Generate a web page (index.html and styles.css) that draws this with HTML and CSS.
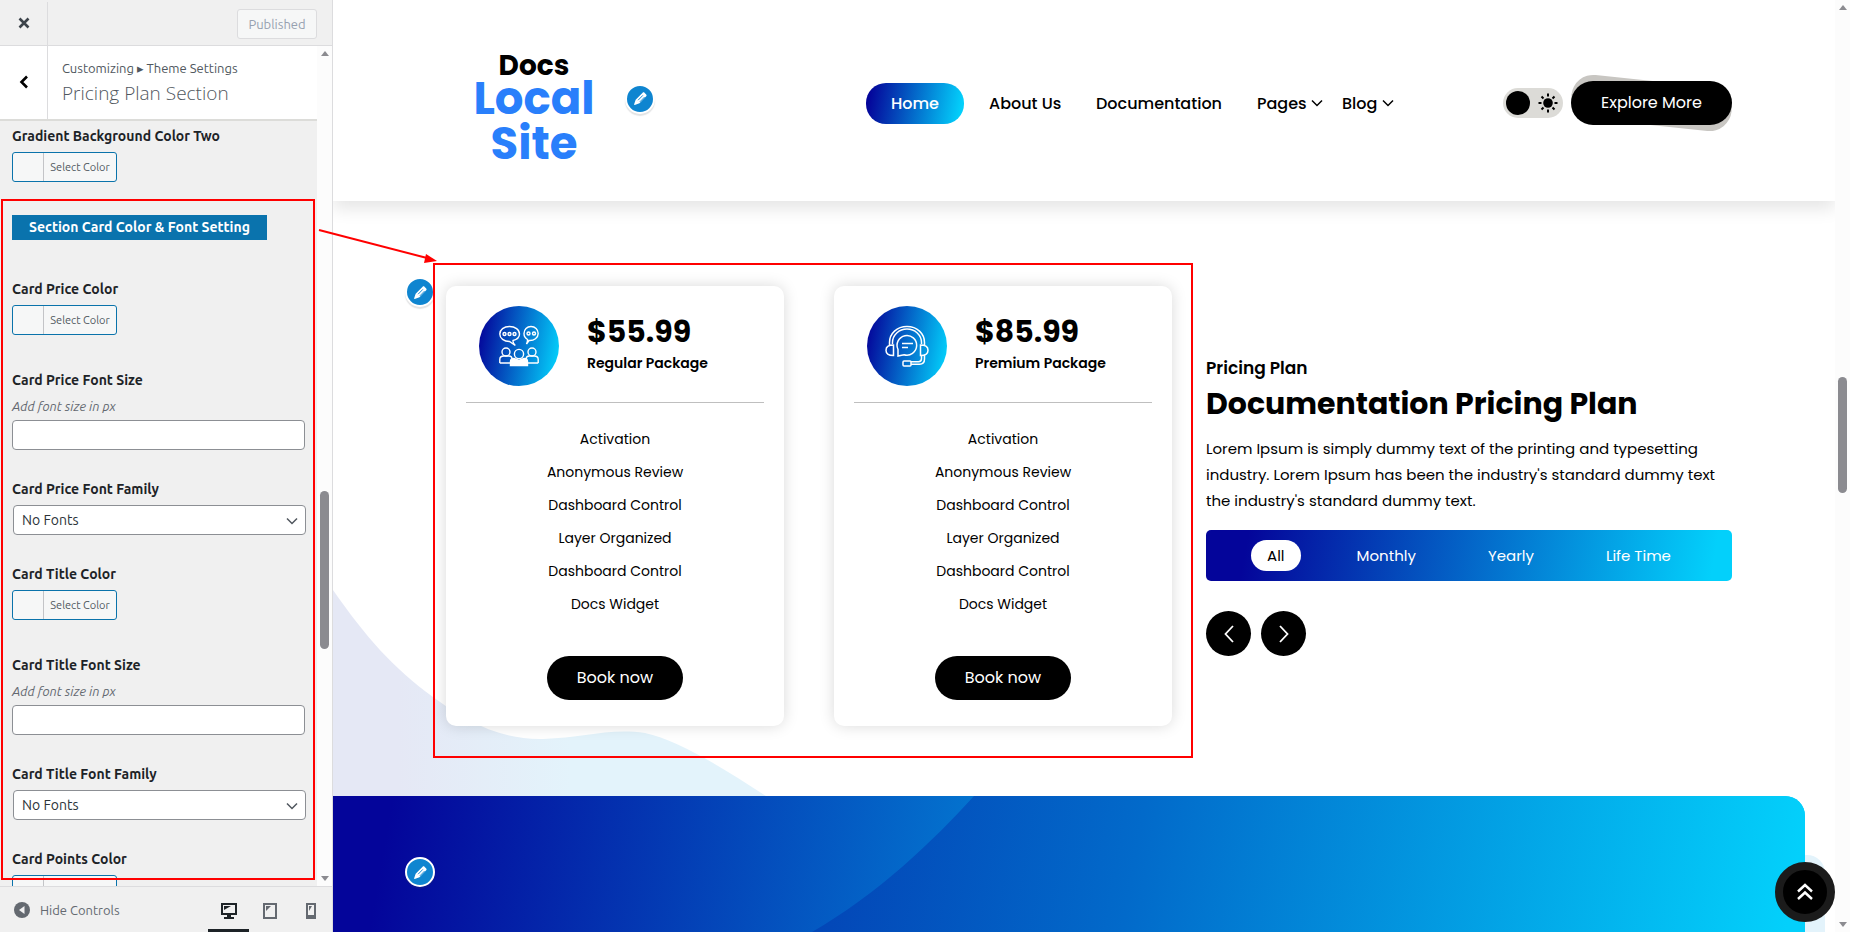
FILE: index.html
```
<!DOCTYPE html>
<html lang="en">
<head>
    <meta charset="UTF-8">
    <meta name="viewport" content="width=device-width, initial-scale=1.0">
    <title>Customize: Docs Local Site</title>
    <link rel="stylesheet" href="styles.css">
</head>
<body>
    <!-- shared icons -->
    <svg width="0" height="0" class="sprite" aria-hidden="true">
        <symbol id="pencil" viewBox="0 0 20 20">
            <path fill="currentColor" d="M12.500 3.200c.6-.6 1.600-.6 2.200 0l2 2c.6.6.6 1.600 0 2.200L8.800 15.600 3.200 17.500c-.5.100-.8-.2-.7-.7L4.300 11.400z"/>
            <path fill="none" stroke="#0f85d0" stroke-width="1.100" d="M7.200 12l5.600-5.700M9.200 14l5.600-5.700"/>
        </symbol>
        <symbol id="chevron" viewBox="0 0 12 12">
            <path fill="none" stroke="currentColor" stroke-width="1.500" d="M1 3.500l5 5 5-5"/>
        </symbol>
    </svg>

    <aside class="controls">
        <header class="controls-header">
            <button class="close" aria-label="Close">
                <svg width="12" height="12" viewBox="0 0 12 12"><path d="M1.500 1.500l9 9M10.500 1.500l-9 9" stroke="#3c434a" stroke-width="2.600"/></svg>
            </button>
            <button class="published" disabled>Published</button>
        </header>

        <div class="controls-body">
            <div class="controls-main">
                <div class="section-title">
                    <button class="back" aria-label="Back">
                        <svg width="10" height="14" viewBox="0 0 10 14"><path d="M8 1.500L2.500 7 8 12.500" fill="none" stroke="#000" stroke-width="2.600"/></svg>
                    </button>
                    <div class="section-name">
                        <span>Customizing <i>&#9656;</i> Theme Settings</span>
                        <h3>Pricing Plan Section</h3>
                    </div>
                </div>
                <div class="control-list">
                    <div class="control color">
                        <span class="label">Gradient Background Color Two</span>
                        <button class="picker"><span>Select Color</span></button>
                    </div>
                    <h4 class="group-title">Section Card Color &amp; Font Setting</h4>
                    <div class="control color">
                        <span class="label">Card Price Color</span>
                        <button class="picker"><span>Select Color</span></button>
                    </div>
                    <div class="control">
                        <label class="label" for="price-size">Card Price Font Size</label>
                        <span class="description">Add font size in px</span>
                        <input type="text" id="price-size">
                    </div>
                    <div class="control">
                        <label class="label" for="price-family">Card Price Font Family</label>
                        <div class="select"><select id="price-family"><option>No Fonts</option></select><svg width="12" height="12"><use href="#chevron"/></svg></div>
                    </div>
                    <div class="control color">
                        <span class="label">Card Title Color</span>
                        <button class="picker"><span>Select Color</span></button>
                    </div>
                    <div class="control">
                        <label class="label" for="title-size">Card Title Font Size</label>
                        <span class="description">Add font size in px</span>
                        <input type="text" id="title-size">
                    </div>
                    <div class="control">
                        <label class="label" for="title-family">Card Title Font Family</label>
                        <div class="select"><select id="title-family"><option>No Fonts</option></select><svg width="12" height="12"><use href="#chevron"/></svg></div>
                    </div>
                    <div class="control color">
                        <span class="label">Card Points Color</span>
                        <button class="picker" aria-label="Select Color"><span>&nbsp;</span></button>
                    </div>
                </div>
                <div class="mark mark-controls"></div>
            </div>
            <div class="scrollbar">
                <i class="arrow up"></i>
                <i class="thumb"></i>
                <i class="arrow down"></i>
            </div>
        </div>

        <footer class="controls-footer">
            <button class="collapse">
                <svg width="16" height="16" viewBox="0 0 16 16"><circle cx="8" cy="8" r="8" fill="#646970"/><path d="M10.500 4v8L5 8z" fill="#f0f0f1"/></svg>
                Hide Controls
            </button>
            <div class="devices">
                <button class="device active" aria-label="Desktop">
                    <svg width="16" height="16" viewBox="0 0 16 16"><path fill="none" stroke="currentColor" stroke-width="2" d="M1 1h14v10H1z"/><path fill="currentColor" d="M3 3h7l-7 4zM6 11h4v3h3v2H3v-2h3z"/></svg>
                </button>
                <button class="device" aria-label="Tablet">
                    <svg width="14" height="16" viewBox="0 0 14 16"><path fill="none" stroke="currentColor" stroke-width="2" d="M1 1h12v14H1z"/><path fill="currentColor" d="M3 3h5L3 8z"/></svg>
                </button>
                <button class="device" aria-label="Mobile">
                    <svg width="10" height="16" viewBox="0 0 10 16"><path fill="none" stroke="currentColor" stroke-width="2" d="M1 1h8v14H1z"/><path fill="currentColor" d="M3 3h3L3 8zM1 12h8v3H1z"/></svg>
                </button>
            </div>
        </footer>
    </aside>

    <main class="preview">
        <div class="page">
            <header class="site-header">
                <div class="container header-row">
                    <div class="logo">
                        <strong>Docs</strong>
                        <a href="#">Local Site</a>
                        <button class="edit edit-logo" aria-label="Edit logo"><svg width="17" height="17"><use href="#pencil"/></svg></button>
                    </div>
                    <nav>
                        <a href="#" class="current">Home</a>
                        <a href="#">About Us</a>
                        <a href="#">Documentation</a>
                        <a href="#">Pages <svg width="12" height="12"><use href="#chevron"/></svg></a>
                        <a href="#">Blog <svg width="12" height="12"><use href="#chevron"/></svg></a>
                    </nav>
                    <div class="actions">
                        <label class="mode">
                            <input type="checkbox" aria-label="Dark mode">
                            <svg width="20" height="20" viewBox="0 0 20 20"><circle cx="10" cy="10" r="4.800"/><path stroke="#000" stroke-width="2" d="M10 .5v3M10 16.500v3M.5 10h3M16.500 10h3M3.500 3.500l2 2M14.500 14.500l2 2M3.500 16.500l2-2M14.500 5.500l2-2"/></svg>
                        </label>
                        <a href="#" class="explore">Explore More</a>
                    </div>
                </div>
            </header>

            <section class="pricing">
                <svg class="wave" width="433" height="206" viewBox="0 0 433 206">
                    <defs>
                        <linearGradient id="pale">
                            <stop offset="0.150" stop-color="#e5e8f5"/>
                            <stop offset="0.550" stop-color="#e3f3fb"/>
                        </linearGradient>
                    </defs>
                    <path fill="url(#pale)" d="M0 0C32 46 60 78 100 107 130 129 165 150 210 149 250 148 275 138 312 143 345 150 390 178 433 206H0z"/>
                </svg>
                <div class="container pricing-row">
                    <div class="plans">
                        <button class="edit edit-plans" aria-label="Edit pricing plan"><svg width="17" height="17"><use href="#pencil"/></svg></button>
                        <article class="card">
                            <div class="card-head">
                                <div class="card-icon">
                                    <svg width="40" height="42" viewBox="0 0 40 42" fill="none" stroke="#fff" stroke-width="1.400">
                                        <path d="M14 15.500c4-1 6.500-3.500 6.500-6.500 0-4.300-4.400-7.500-10-7.500S.8 4.700.8 9s4.200 7.500 9.700 7.500l5.800 4c-2-2-2.500-3.300-2.300-5zM30 15.500c5 .3 9.200-2.700 9.200-7S36 1.500 32 1.500s-7 3-7 7c0 2.800 1.500 4.800 3.500 6 .2 2-.3 3-1 4.500z"/>
                                        <circle cx="5.500" cy="9" r="1.500"/><circle cx="10.500" cy="9" r="1.500"/><circle cx="15.500" cy="9" r="1.500"/>
                                        <circle cx="29.500" cy="8.500" r="1.500"/><circle cx="35" cy="8.500" r="1.500"/>
                                        <circle cx="7" cy="27" r="4"/><circle cx="33" cy="27" r="4"/><circle cx="20" cy="29" r="4.600"/>
                                        <path d="M.8 38v-3.500C.8 32 3 31 5 31h5c2 0 3 1 3 3M.8 38H11M39.200 38v-3.500c0-2.500-2-3.500-4-3.500h-5c-2 0-3 1-3 3M39.200 38H29"/>
                                        <path fill="#fff" d="M11.500 40.500v-4c0-2 1.500-3 3.500-3l5 2 5-2c2 0 3.500 1 3.500 3v4z"/>
                                    </svg>
                                </div>
                                <div class="card-price">
                                    <h2>$55.99</h2>
                                    <h5>Regular Package</h5>
                                </div>
                            </div>
                            <ul>
                                <li>Activation</li>
                                <li>Anonymous Review</li>
                                <li>Dashboard Control</li>
                                <li>Layer Organized</li>
                                <li>Dashboard Control</li>
                                <li>Docs Widget</li>
                            </ul>
                            <a href="#" class="book">Book now</a>
                        </article>
                        <article class="card">
                            <div class="card-head">
                                <div class="card-icon">
                                    <svg width="44" height="42" viewBox="0 0 44 42" fill="none" stroke="#fff" stroke-width="1.500">
                                        <path d="M4.500 20v-2.500C4.500 8.500 12 1.500 22 1.500s17.500 7 17.500 16V20M7.500 19v-1.500C7.500 10 14 4 22 4s14.500 6 14.500 13.500V19"/>
                                        <path d="M8.500 20v10.500C4 30.500 1 28.500 1 25.200S4 20 8.500 20zM35.500 20v10.500c4.500 0 7.500-2 7.500-5.300S40 20 35.500 20z"/>
                                        <path d="M39.500 30v4c0 3.500-2 5.200-5 5.200H26M36.500 31v2.500c0 2.500-1.500 3.200-3 3.200H26"/>
                                        <rect x="18" y="36" width="8" height="5" rx="1"/>
                                        <path d="M13 31v-6.500a9.800 9.800 0 1 1 6 5.200zM17 18.500h11M17 22.500h6"/>
                                    </svg>
                                </div>
                                <div class="card-price">
                                    <h2>$85.99</h2>
                                    <h5>Premium Package</h5>
                                </div>
                            </div>
                            <ul>
                                <li>Activation</li>
                                <li>Anonymous Review</li>
                                <li>Dashboard Control</li>
                                <li>Layer Organized</li>
                                <li>Dashboard Control</li>
                                <li>Docs Widget</li>
                            </ul>
                            <a href="#" class="book">Book now</a>
                        </article>
                        <div class="mark mark-plans"></div>
                    </div>
                    <div class="intro">
                        <h6>Pricing Plan</h6>
                        <h2>Documentation Pricing Plan</h2>
                        <p>Lorem Ipsum is simply dummy text of the printing and typesetting industry. Lorem Ipsum has been the industry's standard dummy text the industry's standard dummy text.</p>
                        <div class="tabs">
                            <button class="active">All</button>
                            <button>Monthly</button>
                            <button>Yearly</button>
                            <button>Life Time</button>
                        </div>
                        <div class="arrows">
                            <button aria-label="Previous"><svg width="10" height="18" viewBox="0 0 10 18"><path d="M9 1L1.500 9 9 17" fill="none" stroke="#fff" stroke-width="1.800"/></svg></button>
                            <button aria-label="Next"><svg width="10" height="18" viewBox="0 0 10 18"><path d="M1 1l7.500 8L1 17" fill="none" stroke="#fff" stroke-width="1.800"/></svg></button>
                        </div>
                    </div>
                </div>
            </section>

            <section class="banner">
                <div class="banner-front">
                    <svg class="sweep" width="100%" height="136">
                        <defs>
                            <linearGradient id="sweep-fill" gradientUnits="userSpaceOnUse" x1="479" y1="40" x2="1440" y2="210">
                                <stop offset="0" stop-color="#0344b6"/>
                                <stop offset="0.330" stop-color="#026aca"/>
                                <stop offset="1" stop-color="#03d0fb"/>
                            </linearGradient>
                        </defs>
                        <path fill="url(#sweep-fill)" d="M641 0C600 45 545 98 479 136H3000V0z"/>
                    </svg>
                    <button class="edit edit-banner" aria-label="Edit banner"><svg width="17" height="17"><use href="#pencil"/></svg></button>
                </div>
            </section>
            <button class="to-top" aria-label="Back to top">
                <svg width="16" height="18" viewBox="0 0 16 18"><path d="M1 8.500L8 2l7 6.500M1 16l7-6.500 7 6.500" fill="none" stroke="#fff" stroke-width="2.400"/></svg>
            </button>
        </div>
        <div class="scrollbar">
            <i class="arrow up"></i>
            <i class="thumb"></i>
            <i class="arrow down"></i>
        </div>
    </main>

    <svg class="pointer" width="120" height="36" viewBox="0 0 120 36">
        <path d="M1 2l108 28" stroke="#f00" stroke-width="2"/>
        <path d="M108 26l11 7-13 2z" fill="#f00"/>
    </svg>
</body>
</html>
```

FILE: styles.css
```
* {
    box-sizing: border-box;
}
body {
    margin: 0;
    height: 100vh;
    display: flex;
    overflow: hidden;
    background: #fff;
    color: #000;
    font-family: Poppins, Inter, sans-serif;
}
h2, h3, h4, h5, h6, p, ul {
    margin: 0;
    padding: 0;
}
button {
    margin: 0;
    padding: 0;
    border: none;
    background: none;
    font: inherit;
    cursor: pointer;
}
a {
    color: inherit;
    text-decoration: none;
}
.sprite {
    position: absolute;
}

/* customizer controls */
.controls {
    width: 333px;
    flex: none;
    display: flex;
    flex-direction: column;
    background: #f0f0f0;
    border-right: 1px solid #dcdcde;
    font-family: Ubuntu, "Noto Sans", sans-serif;
    font-size: 13px;
}
.controls-header {
    height: 46px;
    display: flex;
    justify-content: space-between;
    align-items: center;
    padding: 2px 15px 0 0;
    border-bottom: 1px solid #dcdcde;
}
.close {
    width: 48px;
    height: 43px;
    border-right: 1px solid #dcdcde;
}
.published {
    width: 80px;
    height: 30px;
    border: 1px solid #dcdcde;
    border-radius: 3px;
    background: #f6f7f7;
    color: #96a1b0;
}
.controls-body {
    flex: 1;
    min-height: 0;
    display: flex;
}
.controls-main {
    position: relative;
    flex: 1;
    min-width: 0;
    display: flex;
    flex-direction: column;
}
.section-title {
    height: 75px;
    flex: none;
    display: flex;
    background: #fff;
    border-bottom: 2px solid #dcdcd9;
}
.back {
    width: 48px;
    border-right: 1px solid #dcdcde;
}
.section-name {
    padding: 12px 14px;
    color: #50575e;
    line-height: 20px;
}
.section-name i {
    font-family: "DejaVu Sans", sans-serif;
    font-style: normal;
    font-size: 13px;
}
.section-name h3 {
    font-family: "Open Sans", sans-serif;
    font-size: 19px;
    font-weight: 300;
    line-height: 28px;
}
.control-list {
    flex: 1;
    min-height: 0;
    overflow: hidden;
    padding: 3px 12px 0;
}
.control {
    display: flex;
    flex-direction: column;
    margin-bottom: 27px;
}
.control.color {
    align-items: flex-start;
    margin-bottom: 33px;
}
.label {
    margin-bottom: 4px;
    color: #1d2327;
    font-size: 14px;
    font-weight: 700;
    line-height: 24px;
}
.picker {
    width: 105px;
    height: 30px;
    padding-left: 30px;
    border: 1px solid #0a73ab;
    border-radius: 3px;
    background: #f6f7f7;
    color: #50575e;
    font-size: 11px;
    line-height: 28px;
}
.picker span {
    display: block;
    border-left: 1px solid #c3c4c7;
}
.group-title {
    align-self: flex-start;
    width: 255px;
    margin-bottom: 37px;
    background: #0a73ad;
    color: #fff;
    font-size: 14px;
    line-height: 25px;
    text-align: center;
}
.description {
    margin: 1px 0 5px;
    color: #646970;
    font-style: italic;
    line-height: 18px;
}
.control input, .control select {
    width: 100%;
    height: 30px;
    border: 1px solid #8c8f94;
    border-radius: 4px;
    background: #fff;
}
.control select {
    appearance: none;
    padding: 0 8px;
    color: #2c3338;
    font: inherit;
    font-size: 14px;
}
.select {
    position: relative;
    margin: 0 -1px 0 1px;
}
.select svg {
    position: absolute;
    right: 8px;
    top: 10px;
    color: #50575e;
}
.scrollbar {
    width: 15px;
    flex: none;
    display: flex;
    flex-direction: column;
    align-items: center;
    padding: 5px 0;
    background: #fcfcfc;
}
.arrow {
    border: 4px solid transparent;
}
.arrow.up {
    border-top: none;
    border-bottom: 5px solid #8b8b90;
}
.arrow.down {
    margin-top: auto;
    border-bottom: none;
    border-top: 5px solid #8b8b90;
}
.thumb {
    width: 9px;
    height: 158px;
    margin-top: 435px;
    border-radius: 5px;
    background: #8b8b90;
}
.preview .thumb {
    height: 116px;
    margin-top: 367px;
}
.controls-footer {
    height: 46px;
    flex: none;
    display: flex;
    justify-content: space-between;
    border-top: 1px solid #dcdcde;
    color: #646970;
}
.collapse {
    display: flex;
    align-items: center;
    gap: 10px;
    padding-left: 14px;
    color: inherit;
}
.devices {
    display: flex;
    padding-right: 1px;
}
.device {
    width: 41px;
    height: 45px;
    padding-top: 8px;
    color: #646970;
    border-bottom: 3px solid transparent;
}
.device.active {
    color: #1d2327;
    border-color: #1d2327;
}

/* site preview */
.preview {
    flex: 1;
    min-width: 0;
    display: flex;
}
.page {
    position: relative;
    flex: 1;
    min-width: 0;
    display: flex;
    flex-direction: column;
    overflow: hidden;
}
.container {
    width: 100%;
    max-width: 1320px;
    margin: 0 auto;
    padding: 0 12px;
}
.site-header {
    position: relative;
    z-index: 1;
    background: #fff;
    box-shadow: 0 8px 16px rgba(0, 0, 0, 0.1);
}
.header-row {
    height: 201px;
    display: flex;
    align-items: center;
    padding-top: 5px;
}
.logo {
    position: relative;
    width: 196px;
    padding: 15px 30px 0;
    text-align: center;
}
.logo strong {
    display: block;
    font-size: 28px;
    font-weight: 700;
    line-height: 20px;
}
.logo a {
    display: block;
    color: #297ffb;
    font-size: 45px;
    font-weight: 700;
    line-height: 45px;
}
nav {
    display: grid;
    grid-template-columns: 123px 107px 161px 85px 52px;
    align-items: center;
    margin-left: 234px;
    font-size: 16px;
    font-weight: 500;
    white-space: nowrap;
}
.edit {
    position: absolute;
    width: 30px;
    height: 30px;
    display: grid;
    place-items: center;
    border: 2px solid #fff;
    border-radius: 50%;
    background: #0f85d0;
    color: #fff;
    box-shadow: 0 2px 1px rgba(60, 67, 74, 0.15);
}
.edit-logo {
    left: 189px;
    top: 43px;
}
.current {
    width: 98px;
    height: 41px;
    border-radius: 20px;
    background: linear-gradient(100deg, #04059a 5%, #03d0fb 95%);
    color: #fff;
    line-height: 41px;
    text-align: center;
}
.actions {
    display: flex;
    align-items: center;
    gap: 8px;
    margin-left: auto;
}
.mode {
    width: 60px;
    height: 30px;
    display: flex;
    align-items: center;
    gap: 8px;
    padding: 3px;
    border-radius: 15px;
    background: #dcdbd7;
}
.mode input {
    appearance: none;
    width: 24px;
    height: 24px;
    margin: 0;
    border-radius: 50%;
    background: #000;
}
.explore, .book {
    height: 44px;
    border-radius: 22px;
    background: #000;
    color: #fff;
    font-size: 16px;
    line-height: 44px;
    text-align: center;
}
.explore {
    position: relative;
    width: 161px;
}
.explore::before {
    content: "";
    position: absolute;
    inset: 0;
    z-index: -1;
    border-radius: 22px;
    background: #c8c6c2;
    transform: rotate(6deg);
}
.pricing {
    position: relative;
    padding: 85px 0 70px;
}
.wave {
    position: absolute;
    left: 0;
    bottom: 0;
}
.pricing-row {
    position: relative;
    display: grid;
    grid-template-columns: 746fr 526fr;
    align-items: center;
    gap: 24px;
}
.plans {
    position: relative;
    display: grid;
    grid-template-columns: 1fr 1fr;
    gap: 50px;
    padding: 0 10px;
}
.edit-plans {
    left: -31px;
    top: -9px;
}
.card {
    height: 440px;
    display: flex;
    flex-direction: column;
    align-items: center;
    padding: 20px 20px 26px;
    border-radius: 10px;
    background: #fff;
    box-shadow: 0 0 15px rgba(0, 0, 0, 0.15);
}
.card-head {
    align-self: stretch;
    display: flex;
    align-items: center;
    gap: 28px;
    padding: 0 13px 16px;
    border-bottom: 1px solid #bfbfbf;
}
.card-icon {
    width: 80px;
    height: 80px;
    flex: none;
    display: grid;
    place-items: center;
    border-radius: 50%;
    background: linear-gradient(100deg, #04059a 5%, #03d0fb 95%);
}
.card-price {
    padding-bottom: 6px;
}
.card h2 {
    font-size: 30px;
    line-height: 40px;
}
.card h5 {
    font-size: 14px;
    font-weight: 600;
    line-height: 22px;
}
.card ul {
    padding-top: 20px;
    list-style: none;
    font-size: 14px;
    line-height: 33px;
    text-align: center;
}
.book {
    width: 136px;
    margin-top: auto;
}
.intro h6 {
    font-size: 17px;
    font-weight: 600;
    line-height: 24px;
}
.intro h2 {
    font-size: 30px;
    line-height: 48px;
}
.intro p {
    margin: 8px 0 16px;
    font-size: 15px;
    line-height: 26px;
}
.tabs {
    height: 51px;
    display: flex;
    justify-content: space-evenly;
    align-items: center;
    padding: 0 5px;
    border-radius: 5px;
    background: linear-gradient(100deg, #04059a 8%, #03d0fb 96%);
    color: #fff;
    font-size: 15px;
}
.tabs button {
    height: 31px;
    padding: 0 16px;
    border-radius: 16px;
    color: inherit;
}
.tabs .active {
    background: #fff;
    color: #000;
}
.arrows {
    display: flex;
    gap: 10px;
    margin-top: 30px;
}
.arrows button {
    width: 45px;
    height: 45px;
    display: grid;
    place-items: center;
    border-radius: 50%;
    background: #000;
}
.banner {
    flex: 1;
    padding-right: 30px;
    position: relative;
}
.banner::before {
    content: "";
    position: absolute;
    inset: 59px 10px 0 50%;
    border-top-right-radius: 18px;
    background: #e3f3fb;
}
.banner-front {
    position: relative;
    height: 100%;
    border-top-right-radius: 20px;
    background: linear-gradient(100deg, #04059a 4%, #03d0fb 76%);
    overflow: hidden;
}
.sweep {
    display: block;
}
.edit-banner {
    left: 72px;
    top: 61px;
}
.to-top {
    position: absolute;
    right: 0;
    bottom: 10px;
    width: 60px;
    height: 60px;
    display: grid;
    place-items: center;
    border: 8px solid #1b1b1b;
    border-radius: 50%;
    background: #000;
}

/* highlight marks */
.mark {
    position: absolute;
    border: 2px solid #f00;
    pointer-events: none;
}
.mark-controls {
    inset: 153px 2px 6px 1px;
}
.mark-plans {
    inset: -23px -11px -32px -3px;
}
.pointer {
    position: absolute;
    left: 318px;
    top: 228px;
    z-index: 2;
}
```
